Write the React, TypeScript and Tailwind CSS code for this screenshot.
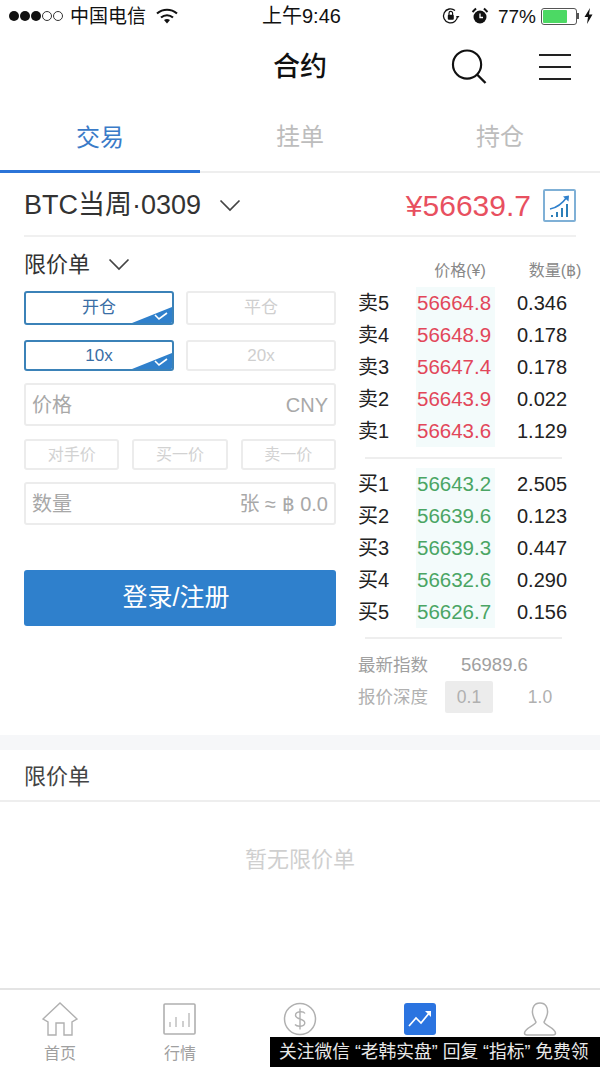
const asks = [
  ["卖5", "56664.8", "0.346"],
  ["卖4", "56648.9", "0.178"],
  ["卖3", "56647.4", "0.178"],
  ["卖2", "56643.9", "0.022"],
  ["卖1", "56643.6", "1.129"],
];

const bids = [
  ["买1", "56643.2", "2.505"],
  ["买2", "56639.6", "0.123"],
  ["买3", "56639.3", "0.447"],
  ["买4", "56632.6", "0.290"],
  ["买5", "56626.7", "0.156"],
];

const Chevron = ({ className }: { className?: string }) => (
  <svg width="22" height="13" viewBox="0 0 22 13" className={className}>
    <path d="M1.5 1.5L11 11L20.5 1.5" fill="none" stroke="#444" strokeWidth="1.7" />
  </svg>
);

const StatusBar = () => (
  <div className="h-[32px] flex items-center pl-[9px] pr-[7px] text-[19px] leading-none text-[#111]">
    <div className="flex items-center w-[253px]">
      <div className="flex gap-[1px] mr-[7px]">
        {[0, 1, 2].map((i) => (
          <span key={i} className="w-[10px] h-[10px] rounded-full bg-[#111]" />
        ))}
        {[0, 1].map((i) => (
          <span key={i} className="w-[10px] h-[10px] rounded-full border border-[#333]" />
        ))}
      </div>
      <span>中国电信</span>
      <svg width="22" height="16" viewBox="0 0 22 16" className="ml-[10px]">
        <path d="M1 5.5C7 0.5 15 0.5 21 5.5" fill="none" stroke="#111" strokeWidth="2.2" />
        <path d="M5 9.5C8.5 6.5 13.5 6.5 17 9.5" fill="none" stroke="#111" strokeWidth="2.2" />
        <path d="M8 12C10 10.6 12 10.6 14 12L11 15.5Z" fill="#111" />
      </svg>
    </div>
    <span className="text-[20px]">上午9:46</span>
    <div className="flex items-center ml-auto">
      <svg width="18" height="18" viewBox="0 0 18 18" className="mr-[11px]">
        <path d="M15.5 9A7 7 0 1 1 13 3.5" fill="none" stroke="#111" strokeWidth="1.3" />
        <rect x="5.8" y="7.8" width="6" height="5" rx="1" fill="#111" />
        <path d="M7 8V6.2a1.8 1.8 0 0 1 3.6 0V8" fill="none" stroke="#111" strokeWidth="1.2" />
        <path d="M14 9h3.5l-1.7 2.2Z" fill="#111" />
      </svg>
      <svg width="18" height="18" viewBox="0 0 18 18" className="mr-[9px]">
        <circle cx="9" cy="10" r="6.5" fill="#111" />
        <path d="M9 6.5V10.5H12" fill="none" stroke="#fff" strokeWidth="1.3" />
        <path d="M1.5 5L5 1.5M16.5 5L13 1.5" stroke="#111" strokeWidth="2" />
      </svg>
      <span className="mr-[5px]">77%</span>
      <div className="w-[36px] h-[17px] rounded-[3px] border border-[#555] p-[1px]">
        <div className="h-full w-[76%] bg-[#4cd964] rounded-[1px]" />
      </div>
      <span className="w-[2px] h-[6px] bg-[#555] mr-[5px]" />
      <svg width="9" height="16" viewBox="0 0 9 16">
        <path d="M6 0L0.5 9H4L3 16L8.5 6.5H5Z" fill="#111" />
      </svg>
    </div>
  </div>
);

const NavBar = () => (
  <div className="h-[70px] flex items-center relative">
    <h1 className="w-full text-center text-[27px] font-medium text-[#111] leading-none">合约</h1>
    <div className="absolute right-[29px] top-[17px] flex items-center gap-[52px]">
      <svg width="36" height="35" viewBox="0 0 36 36">
        <circle cx="16" cy="16" r="14.5" fill="none" stroke="#111" strokeWidth="2.2" />
        <path d="M26 26L35 35" stroke="#111" strokeWidth="2.4" />
      </svg>
      <div className="w-[32px] flex flex-col gap-[10px]">
        <span className="h-[2px] bg-[#222]" />
        <span className="h-[2px] bg-[#222]" />
        <span className="h-[2px] bg-[#222]" />
      </div>
    </div>
  </div>
);

const Tabs = () => (
  <div className="h-[71px] flex border-b-2 border-[#eeeeee] text-[24px]">
    <div className="w-1/3 h-[71px] flex items-center justify-center text-[#3a7bc8] border-b-[3px] border-[#2b74d8] pt-[3px]">交易</div>
    <div className="w-1/3 flex items-center justify-center text-[#bdbdbd] pt-[1px]">挂单</div>
    <div className="w-1/3 flex items-center justify-center text-[#bdbdbd] pt-[1px]">持仓</div>
  </div>
);

const ToggleButton = ({ label, active, h }: { label: string; active?: boolean; h: string }) => (
  <div
    className={`relative flex-1 flex items-center justify-center rounded-[3px] text-[17px] overflow-hidden ${h} ${
      active ? "border-2 border-[#3b82b8] text-[#3a6ea5]" : "border-2 border-[#ececec] text-[#cfcfcf]"
    }`}
  >
    {label}
    {active && (
      <svg width="40" height="16" viewBox="0 0 40 16" className="absolute right-0 bottom-0">
        <path d="M40 0V16H0Z" fill="#2f80cc" />
        <path d="M23 8L27 12L35 6" fill="none" stroke="#fff" strokeWidth="1.6" />
      </svg>
    )}
  </div>
);

const OrderForm = () => (
  <div className="w-[312px] flex flex-col">
    <div className="h-[54px] flex items-center text-[22px] text-[#333]">
      限价单
      <Chevron className="ml-[18px]" />
    </div>
    <div className="flex gap-[12px]">
      <ToggleButton label="开仓" active h="h-[34px]" />
      <ToggleButton label="平仓" h="h-[34px]" />
    </div>
    <div className="flex gap-[12px] mt-[15px]">
      <ToggleButton label="10x" active h="h-[31px]" />
      <ToggleButton label="20x" h="h-[31px]" />
    </div>
    <div className="h-[43px] mt-[12px] px-[6px] flex items-center justify-between border-2 border-[#ececec] rounded-[3px] text-[20px] text-[#a8a8a8]">
      <span>价格</span>
      <span>CNY</span>
    </div>
    <div className="flex gap-[13px] mt-[13px] text-[16px] text-[#d2d2d2]">
      {["对手价", "买一价", "卖一价"].map((label) => (
        <div key={label} className="flex-1 h-[31px] flex items-center justify-center border-2 border-[#ececec] rounded-[3px]">
          {label}
        </div>
      ))}
    </div>
    <div className="h-[43px] mt-[12px] px-[6px] flex items-center justify-between border-2 border-[#ececec] rounded-[3px] text-[20px] text-[#a8a8a8]">
      <span>数量</span>
      <span>张 ≈ ฿ 0.0</span>
    </div>
    <button className="h-[56px] mt-[45px] pr-[8px] rounded-[3px] bg-[#2f80cc] text-white text-[25px]">登录/注册</button>
  </div>
);

const DepthRow = ({ row, color }: { row: string[]; color: string }) => (
  <div className="h-[32px] flex items-center text-[20px] leading-none">
    <span className="w-[58px] shrink-0 text-[#222]">{row[0]}</span>
    <span className={`w-[79px] shrink-0 h-full flex items-center pl-[1px] text-[20.5px] bg-[#f3fbfb] ${color}`}>{row[1]}</span>
    <span className="w-[74px] shrink-0 ml-[10px] text-center text-[#222]">{row[2]}</span>
  </div>
);

const OrderBook = () => (
  <div className="w-[242px] ml-[22px] flex flex-col">
    <div className="h-[32px] mt-[18px] pl-[66px] flex items-center text-[16px] text-[#888]">
      <span className="w-[72px] shrink-0 text-center">价格(¥)</span>
      <span className="w-[72px] shrink-0 ml-[23px] text-center">数量(฿)</span>
    </div>
    <div>
      {asks.map((row) => (
        <DepthRow key={row[0]} row={row} color="text-[#e2475a]" />
      ))}
    </div>
    <div className="h-[2px] w-[197px] ml-[7px] mt-[10px] mb-[9px] bg-[#eeeeee]" />
    {bids.map((row) => (
      <DepthRow key={row[0]} row={row} color="text-[#4aa564]" />
    ))}
    <div className="h-[2px] w-[197px] ml-[7px] mt-[9px] bg-[#eeeeee]" />
    <div className="h-[32px] mt-[10px] flex items-center text-[17.5px] text-[#a0a0a0]">
      <span className="w-[103px] shrink-0">最新指数</span>
      <span className="text-[18.5px]">56989.6</span>
    </div>
    <div className="h-[32px] flex items-center text-[17.5px] text-[#b0b0b0]">
      <span className="w-[87px] shrink-0">报价深度</span>
      <span className="w-[48px] shrink-0 h-[32px] flex items-center justify-center rounded-[2px] bg-[#ececec]">0.1</span>
      <span className="w-[94px] shrink-0 text-center">1.0</span>
    </div>
  </div>
);

const TabBar = () => (
  <div className="h-[79px] border-t-2 border-[#e4e4e4] flex text-[16px] text-[#a0a0a0]">
    <div className="w-[120px] flex flex-col items-center pt-[12px]">
      <svg width="36" height="34" viewBox="0 0 36 34" fill="none" stroke="#b0b0b0" strokeWidth="1.4">
        <path d="M1 17L18 1L35 17L30 20V33H22V21H14V33H6V20Z" />
      </svg>
      <span className="mt-[6px]">首页</span>
    </div>
    <div className="w-[120px] flex flex-col items-center pt-[12px]">
      <svg width="34" height="34" viewBox="0 0 34 34" fill="none" stroke="#b0b0b0">
        <rect x="1" y="2" width="31" height="30" rx="1" strokeWidth="1.6" />
        <path d="M7 25V20M13 25V15M20 25V19M26 25V11" strokeWidth="1.2" />
      </svg>
      <span className="mt-[6px]">行情</span>
    </div>
    <div className="w-[120px] flex flex-col items-center pt-[12px]">
      <svg width="34" height="34" viewBox="0 0 34 34" fill="none" stroke="#b0b0b0">
        <circle cx="17" cy="17" r="15.5" strokeWidth="1.5" />
        <path d="M22 11.5C20.5 9 13 9 12.5 13C12 18 22 16 21.8 21C21.5 25 14 25 12 22.5M17 6.5V27.5" strokeWidth="1.4" />
      </svg>
    </div>
    <div className="w-[120px] flex flex-col items-center pt-[12px]">
      <svg width="32" height="32" viewBox="0 0 32 32" className="mt-[1px]">
        <rect width="32" height="32" rx="3" fill="#2b74e0" />
        <path d="M5 23L12 15L17 20L26 9" fill="none" stroke="#fff" strokeWidth="1.7" />
        <path d="M21 8H27V14Z" fill="#fff" />
      </svg>
    </div>
    <div className="w-[120px] flex flex-col items-center pt-[12px]">
      <svg width="34" height="34" viewBox="0 0 34 34" fill="none" stroke="#b0b0b0" strokeWidth="1.5">
        <path d="M17 1C11 1 9 6 9.5 11C10 15 12 18 13 20C13 23 2 26 1.5 31C1.5 33 3 33 4 33H30C31 33 32.5 33 32.5 31C32 26 21 23 21 20C22 18 24 15 24.5 11C25 6 23 1 17 1Z" />
      </svg>
    </div>
  </div>
);

const App = () => {
  return (
    <div className="relative w-[600px] h-[1067px] overflow-hidden bg-white font-['Liberation_Sans','Noto_Sans_CJK_SC',sans-serif]">
      <StatusBar />
      <NavBar />
      <Tabs />
      <div className="mx-[24px] h-[64px] pt-[3px] flex items-center border-b-2 border-[#f0f0f0]">
        <span className="text-[27px] text-[#333]">BTC当周·0309</span>
        <Chevron className="ml-[18px]" />
        <span className="ml-auto text-[30px] text-[#e8505f]">¥56639.7</span>
        <div className="ml-[12px] w-[33px] h-[33px] rounded-[2px] border-2 border-[#7fb0d6] flex items-center justify-center">
          <svg width="24" height="24" viewBox="0 0 24 24" fill="none">
            <path d="M2 15C8 14 14 10 19 3" stroke="#2f80cc" strokeWidth="1.6" />
            <path d="M15 2.5L21 1.5L20.5 7.5Z" fill="#2f80cc" />
            <path d="M4 21V23M9 18V23M14 14V23M19 10V23" stroke="#2d7fb8" strokeWidth="2" />
          </svg>
        </div>
      </div>
      <div className="flex pl-[24px] h-[498px]">
        <OrderForm />
        <OrderBook />
      </div>
      <div className="h-[15px] bg-[#f6f7f9]" />
      <div className="h-[52px] pt-[2px] px-[24px] flex items-center text-[22px] text-[#444] border-b-2 border-[#eeeeee]">限价单</div>
      <div className="h-[186px] pb-[72px] flex items-center justify-center text-[22px] text-[#cfcfcf]">暂无限价单</div>
      <TabBar />
      {/* watermark sits over the tab bar */}
      <div className="absolute right-0 bottom-0 w-[330px] h-[30px] pl-[9px] flex items-center bg-black text-[#e8e8e8] text-[17.75px] whitespace-nowrap overflow-hidden">
        关注微信 “老韩实盘” 回复 “指标” 免费领
      </div>
    </div>
  );
};

export default App;
